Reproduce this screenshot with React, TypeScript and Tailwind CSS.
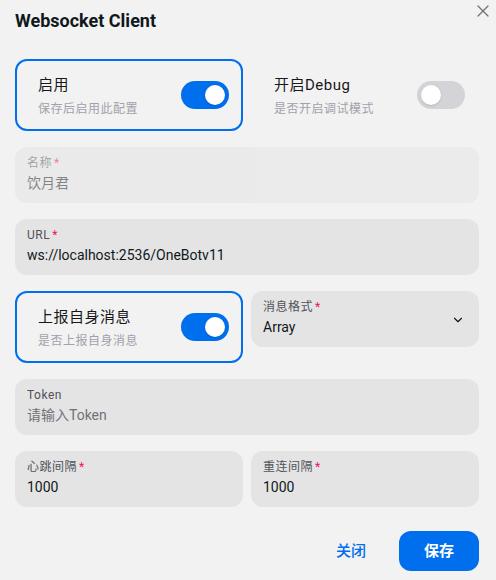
import React, { useState } from 'react';
import { X, ChevronDown } from 'lucide-react';

const font = { fontFamily: 'Roboto, "Noto Sans CJK SC", sans-serif' };

interface SwitchProps {
  on: boolean;
  onToggle: () => void;
}

const Switch: React.FC<SwitchProps> = ({ on, onToggle }) => (
  <button
    onClick={onToggle}
    className={`relative h-7 w-12 shrink-0 rounded-full transition-colors ${on ? 'bg-[#006fee]' : 'bg-[#d4d4d8]'}`}
  >
    <span
      className={`absolute top-1 h-5 w-5 rounded-full bg-white shadow-sm transition-all ${on ? 'left-[24px]' : 'left-1'}`}
    />
  </button>
);

interface SwitchCardProps {
  title: string;
  desc: string;
  on: boolean;
  onToggle: () => void;
}

const SwitchCard: React.FC<SwitchCardProps> = ({ title, desc, on, onToggle }) => (
  <div
    className={`flex h-[72px] items-center justify-between rounded-xl border-2 pl-[21px] pr-3 ${on ? 'border-[#006fee]' : 'border-transparent'}`}
  >
    <div className="flex flex-col gap-1">
      <span className="text-[15px] leading-6 tracking-[0.5px] text-[#18181b]">{title}</span>
      <span className="text-xs leading-4 tracking-[0.5px] text-[#a1a1aa]">{desc}</span>
    </div>
    <Switch on={on} onToggle={onToggle} />
  </div>
);

interface FieldProps {
  label: string;
  value?: string;
  placeholder?: string;
  required?: boolean;
  disabled?: boolean;
  select?: boolean;
}

const Field: React.FC<FieldProps> = ({ label, value, placeholder, required, disabled, select }) => (
  <div
    className={`relative flex h-14 flex-col rounded-xl bg-[#e4e4e4] px-3 pt-2 ${disabled ? 'opacity-50' : ''}`}
  >
    <span className="text-xs leading-4 tracking-[0.5px] text-[#52525b]">
      {label}
      {required && <span className="ml-0.5 text-[#f31260]">*</span>}
    </span>
    <span className={`mt-[2px] text-sm leading-5 ${value ? 'text-[#11181c]' : 'text-[#71717a]'}`}>
      {value || placeholder}
    </span>
    {select && (
      <ChevronDown className="absolute right-[14px] top-[22px] text-[#11181c]" size={14} strokeWidth={2} />
    )}
  </div>
);

export default function App() {
  const [enable, setEnable] = useState(true);
  const [debug, setDebug] = useState(false);
  const [selfMsg, setSelfMsg] = useState(true);

  return (
    <div className="relative h-[580px] w-[496px] overflow-hidden bg-[#f2f2f2]" style={font}>
      <button className="absolute right-[3px] top-[1px] text-[#71717a]">
        <X size={20} strokeWidth={1.5} />
      </button>

      <div className="pl-[15px] pr-[17px]">
        <h2 className="pt-[9px] text-lg font-bold leading-6 text-[#11181c]">Websocket Client</h2>

        <div className="mt-[26px] flex flex-col gap-4">
          <div className="grid grid-cols-2 gap-2">
            <SwitchCard title="启用" desc="保存后启用此配置" on={enable} onToggle={() => setEnable(!enable)} />
            <SwitchCard title="开启Debug" desc="是否开启调试模式" on={debug} onToggle={() => setDebug(!debug)} />
          </div>

          <Field label="名称" value="饮月君" required disabled />
          <Field label="URL" value="ws://localhost:2536/OneBotv11" required />

          <div className="grid grid-cols-2 items-start gap-2">
            <SwitchCard title="上报自身消息" desc="是否上报自身消息" on={selfMsg} onToggle={() => setSelfMsg(!selfMsg)} />
            <Field label="消息格式" value="Array" required select />
          </div>

          <Field label="Token" placeholder="请输入Token" />

          <div className="grid grid-cols-2 gap-2">
            <Field label="心跳间隔" value="1000" required />
            <Field label="重连间隔" value="1000" required />
          </div>
        </div>

        <div className="mt-6 flex justify-end gap-2">
          <button className="h-10 min-w-20 rounded-xl px-4 text-[15px] font-medium text-[#006fee]">关闭</button>
          <button className="h-10 min-w-20 rounded-xl bg-[#006fee] px-4 text-[15px] font-bold text-white">保存</button>
        </div>
      </div>
    </div>
  );
}
